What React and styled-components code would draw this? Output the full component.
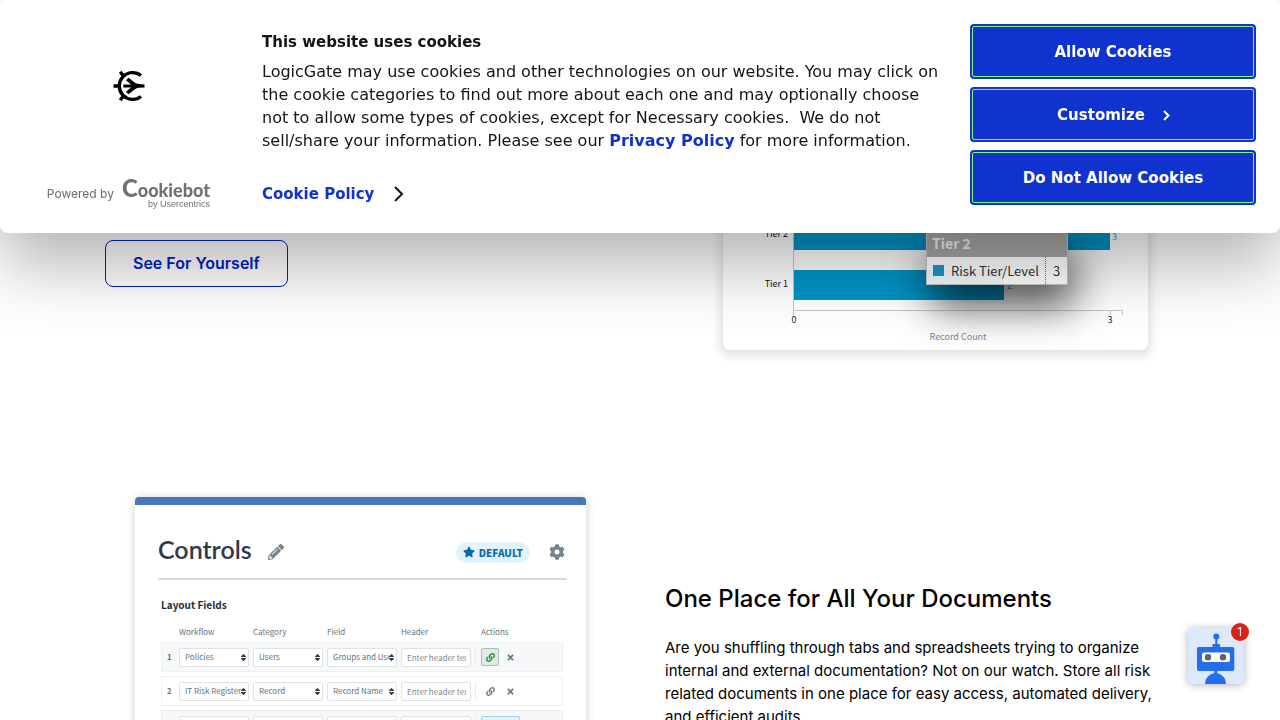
import React from "react";
import styled, { createGlobalStyle } from "styled-components";
import { FaPencilAlt, FaStar, FaCog, FaLink, FaTimes, FaSort } from "react-icons/fa";

const GlobalStyle = createGlobalStyle`
  *, *::before, *::after { box-sizing: border-box; }
  body { margin: 0; background: #fff; color: #000; font-family: Inter, "Liberation Sans", sans-serif; }
  button, input, select { font: inherit; color: inherit; margin: 0; }
  h1, h2, h3, p { margin: 0; }
`;

const smallFont = `"Noto Sans CJK SC", "Noto Sans", sans-serif`;

/* ---------- cookie dialog ---------- */

const Dialog = styled.section`
  position: fixed;
  inset: 0 0 auto 0;
  z-index: 10;
  display: grid;
  grid-template-columns: 214px minmax(0, 1fr) 286px;
  padding: 24px;
  background: #fff;
  border-radius: 8px;
  box-shadow: 0 32px 68px rgba(0, 0, 0, 0.3);
  color: #141414;
  font-family: "DejaVu Sans", sans-serif;
  font-size: 15px;
`;

const Brand = styled.div`
  display: flex;
  flex-direction: column;
  justify-content: space-between;
  align-items: center;
  padding-top: 46px;
`;

const BrandMark = styled.svg`
  display: block;
  width: 32px;
  height: 32px;
  margin-right: 4px;
`;

const PoweredBy = styled.a`
  display: flex;
  align-items: center;
  gap: 8px;
  align-self: flex-end;
  margin-right: 28px;
  color: #6b6b6b;
  font-family: Inter, sans-serif;
  font-size: 12px;
  line-height: 28px;
  text-decoration: none;
  white-space: nowrap;
`;

const Wordmark = styled.span`
  display: flex;
  flex-direction: column;
  align-items: flex-end;
  color: #717171;
`;

const WordmarkName = styled.span`
  display: block;
  font-family: Lato, sans-serif;
  font-weight: 900;
  font-size: 18px;
  line-height: 18px;

  &::first-letter { font-size: 24px; }
`;

const WordmarkBy = styled.span`
  font-family: "Liberation Sans", sans-serif;
  font-size: 9px;
  line-height: 10px;
`;

const Notice = styled.div`
  display: flex;
  flex-direction: column;
  align-items: flex-start;
  padding: 8px 24px 0;
`;

const NoticeTitle = styled.h2`
  font-size: 15px;
  line-height: 20px;
  font-weight: 700;
`;

const NoticeText = styled.p`
  margin-top: 8px;
  font-size: 16px;
  line-height: 23px;
`;

const InlineLink = styled.a`
  color: #1032cf;
  font-weight: 700;
  text-decoration: none;
`;

const PolicyLink = styled(InlineLink)`
  display: flex;
  align-items: center;
  gap: 20px;
  margin-top: 32px;
  line-height: 20px;
`;

const Chevron = styled.svg`
  width: ${(p) => p.$width}px;
  height: ${(p) => p.$height}px;
  overflow: visible;
  fill: none;
  stroke: ${(p) => p.$color};
  stroke-width: 2;
`;

const Choices = styled.div`
  display: flex;
  flex-direction: column;
  gap: 8px;
  padding-bottom: 4px;
`;

const ChoiceButton = styled.button`
  display: flex;
  align-items: center;
  justify-content: center;
  gap: 18px;
  height: 55px;
  border: 2px solid #1032cf;
  border-radius: 4px;
  background: #1032cf;
  color: #fff;
  font-weight: 700;
  outline: 1px solid #7fff66;
  outline-offset: -3px;
`;

/* ---------- page ---------- */

const Page = styled.main`
  height: 100vh;
  overflow: hidden;
  padding-top: 190px;
`;

const Feature = styled.section`
  display: grid;
  grid-template-columns: 1fr 1fr;
  max-width: 1120px;
  margin: 0 auto;

  & + & { margin-top: 146px; }
`;

const Column = styled.div`
  min-width: 0;
  padding: 0 25px;
`;

const CtaColumn = styled(Column)`
  padding-top: 50px;
`;

const CtaLink = styled.a`
  display: inline-block;
  padding: 0 27px;
  border: 1px solid #0022c7;
  border-radius: 8px;
  color: #0022c7;
  font-weight: 600;
  font-size: 16px;
  line-height: 45px;
  text-decoration: none;
`;

const ChartCard = styled.figure`
  position: relative;
  width: 427px;
  margin: 0 0 0 57px;
  border: 1px solid #e8e8e8;
  border-radius: 8px;
  background: #fff;
  box-shadow: 0 3px 8px 3px rgba(0, 0, 0, 0.1);
`;

const Chart = styled.svg`
  display: block;
  width: 100%;
  font-family: ${smallFont};
  font-size: 9px;
`;

const ChartTip = styled.div`
  position: absolute;
  left: 203px;
  top: 37px;
  width: 142px;
  border: 1px solid #c4c4c4;
  background: rgba(255, 255, 255, 0.95);
  color: #333;
  font-family: ${smallFont};
  font-size: 13px;
  box-shadow: 6px 22px 40px 0 rgba(0, 0, 0, 0.65);
`;

const TipHeading = styled.div`
  padding: 0 5px;
  background: #a7a7a7;
  color: #f2f2f2;
  font-size: 14px;
  font-weight: 700;
  line-height: 28px;
`;

const TipRow = styled.div`
  display: grid;
  grid-template-columns: 1fr 21px;
  line-height: 27px;
`;

const TipName = styled.span`
  display: flex;
  align-items: center;
  gap: 7px;
  padding-left: 6px;
  border-right: 1px dotted #777;

  &::before {
    content: "";
    width: 11px;
    height: 11px;
    background: #2095c4;
  }
`;

const TipValue = styled.span`
  text-align: center;
`;

const LayoutCard = styled.div`
  width: 451px;
  margin: 0 0 0 30px;
  padding: 32px 19px 0 23px;
  border-top: 8px solid #4876b9;
  border-radius: 4px;
  background: #fff;
  box-shadow: 0 1px 10px rgba(0, 0, 0, 0.2);
  color: #65727e;
  font-family: ${smallFont};
`;

const LayoutHead = styled.header`
  display: flex;
  align-items: center;
  height: 43px;
  padding-right: 2px;
  padding-bottom: 11px;
  border-bottom: 2px solid #dadada;
  color: #76858f;
  font-size: 16px;
`;

const LayoutTitle = styled.h3`
  margin-right: 16px;
  padding-bottom: 6px;
  color: #30394c;
  font-family: Lato, sans-serif;
  font-size: 25px;
  font-weight: 600;
  line-height: 30px;
`;

const DefaultBadge = styled.span`
  display: flex;
  align-items: center;
  gap: 4px;
  height: 21px;
  margin: 0 19px 0 auto;
  padding: 0 7px;
  border-radius: 11px;
  background: #e2f3fe;
  color: #0b69aa;
  font-size: 10px;
  font-weight: 900;

  svg { font-size: 12px; }
`;

const LayoutLabel = styled.h4`
  margin: 16px 0 0 3px;
  color: #252d38;
  font-size: 10px;
  font-weight: 700;
  line-height: 18px;
`;

const FieldTable = styled.table`
  width: 402px;
  margin: 8px 0 0 3px;
  table-layout: fixed;
  border-collapse: separate;
  border-spacing: 0 4px;
  font-size: 8px;
  line-height: 12px;
`;

const HeadCell = styled.th`
  width: ${(p) => p.$width};
  height: 12px;
  padding: 0 0 0 ${(p) => p.$pad || 0}px;
  font-weight: 400;
  text-align: left;
`;

const FieldRow = styled.tr`
  height: 30px;
  background: ${(p) => (p.$shaded ? "#f6f8fa" : "#fff")};
  outline: 1px solid #eef1f3;
  outline-offset: -1px;
`;

const Cell = styled.td`
  padding: 0;
  vertical-align: middle;
`;

const NumberCell = styled(Cell)`
  padding-left: 6px;
  font-weight: 700;
`;

const SelectBox = styled.label`
  position: relative;
  display: block;
  width: 70px;

  svg {
    position: absolute;
    right: 1px;
    top: 5px;
    font-size: 9px;
    color: #333d49;
  }
`;

const Select = styled.select`
  display: block;
  appearance: none;
  width: 100%;
  height: 19px;
  padding: 0 7px 0 5px;
  border: 1px solid #dfe3e6;
  border-radius: 2px;
  background: #fff;
  line-height: 12px;
`;

const TextField = styled.input`
  display: block;
  width: 70px;
  height: 19px;
  padding: 0 4px 0 5px;
  border: 1px solid #dfe3e6;
  border-radius: 2px;
  background: #fff;

  &::placeholder { color: #7e8993; opacity: 1; }
`;

const Actions = styled.div`
  display: flex;
  align-items: center;
  gap: 2px;
  padding-left: 5px;
  border-left: 1px solid #e9ecee;
`;

const IconButton = styled.button`
  display: grid;
  place-items: center;
  width: ${(p) => (p.$wide ? 39 : 18)}px;
  height: 18px;
  padding: 0;
  border: 1px solid ${(p) => p.$edge || "transparent"};
  border-radius: 2px;
  background: ${(p) => p.$fill || "transparent"};
  color: ${(p) => p.$ink || "#6b7783"};
  font-size: 9px;
`;

const CopyColumn = styled(Column)`
  padding-top: 86px;
`;

const CopyTitle = styled.h2`
  font-size: 24px;
  font-weight: 500;
  line-height: 32px;
`;

const CopyText = styled.p`
  margin-top: 21px;
  font-size: 15px;
  line-height: 23px;
`;

/* ---------- chat launcher ---------- */

const ChatLauncher = styled.button`
  position: fixed;
  right: 36px;
  bottom: 36px;
  width: 56px;
  height: 56px;
  padding: 0;
  border: 0;
  border-radius: 4px;
  background: #dde8fb;
  box-shadow: 0 1px 8px rgba(0, 0, 0, 0.3);

  svg { display: block; }
`;

const UnreadBadge = styled.span`
  position: absolute;
  top: -5px;
  right: -5px;
  width: 18px;
  height: 18px;
  border-radius: 50%;
  background: #d6221a;
  color: #fff;
  font-family: Roboto, sans-serif;
  font-size: 12px;
  line-height: 18px;
  text-align: center;
`;

const rows = [
  { workflow: "Policies", category: "Users", field: "Groups and Users", linked: true },
  { workflow: "IT Risk Register", category: "Record", field: "Record Name" },
  { workflow: "", category: "", field: "", pending: true },
];

function Picker({ name, value }) {
  return (
    <SelectBox>
      <Select aria-label={name} defaultValue={value}>
        <option>{value}</option>
      </Select>
      <FaSort />
    </SelectBox>
  );
}

function FieldLayoutRow({ row, index }) {
  return (
    <FieldRow $shaded={index % 2 === 0}>
      <NumberCell>{index + 1}</NumberCell>
      <Cell><Picker name="Workflow" value={row.workflow} /></Cell>
      <Cell><Picker name="Category" value={row.category} /></Cell>
      <Cell><Picker name="Field" value={row.field} /></Cell>
      <Cell>
        <TextField aria-label="Header" placeholder={row.pending ? "" : "Enter header text"} />
      </Cell>
      <Cell>
        <Actions>
          {row.pending ? (
            <IconButton type="button" $wide $fill="#e2f3fe" $edge="#a9cde6" aria-label="Edit" />
          ) : (
            <>
              <IconButton
                type="button"
                aria-label="Link"
                $fill={row.linked && "#e3e8e8"}
                $edge={row.linked && "#9fc5ab"}
                $ink={row.linked && "#1f9233"}
              >
                <FaLink />
              </IconButton>
              <IconButton type="button" aria-label="Remove"><FaTimes /></IconButton>
            </>
          )}
        </Actions>
      </Cell>
    </FieldRow>
  );
}

function RiskChart() {
  return (
    <ChartCard>
      <Chart viewBox="0 0 425 159" role="img" aria-label="Record count by tier">
        <g fill="#0095c8">
          <rect x="71" y="30" width="316" height="29" />
          <rect x="71" y="79" width="210" height="30" />
        </g>
        <path d="M70.500 30V119.500H399.500V124M70.500 119.500V124M387.500 119.500V124" fill="none" stroke="#c3c8cc" />
        <g fill="#111" textAnchor="end">
          <text x="65" y="46">Tier 2</text>
          <text x="65" y="96">Tier 1</text>
        </g>
        <g fill="#2f9fca">
          <text x="389" y="49">3</text>
          <text x="284" y="98">2</text>
        </g>
        <g fill="#222" textAnchor="middle">
          <text x="71" y="132">0</text>
          <text x="387" y="132">3</text>
        </g>
        <text x="235" y="149" fill="#7d8991" textAnchor="middle">Record Count</text>
      </Chart>
      <ChartTip>
        <TipHeading>Tier 2</TipHeading>
        <TipRow>
          <TipName>Risk Tier/Level</TipName>
          <TipValue>3</TipValue>
        </TipRow>
      </ChartTip>
    </ChartCard>
  );
}

function CookieDialog() {
  return (
    <Dialog role="dialog" aria-labelledby="cookie-title">
      <Brand>
        <BrandMark viewBox="0 0 32 32" aria-hidden="true">
          <g fill="none" stroke="#000" strokeWidth="3.400">
            <path d="M28 5.500A13.400 13.400 0 1 0 28 26.500" />
            <path d="M0.500 16H5M7.300 1.800L10 5.500M7.300 30.200L10 26.500" />
            <path d="M10.300 16H24" strokeWidth="3" />
          </g>
          <path d="M15.500 7.800L22.300 13Q24.500 14.400 31.500 14.400V17.600Q24.500 17.600 22.300 19L15.500 24.200L13 21.800L18.500 17V15L13 10.200Z" />
        </BrandMark>
        <PoweredBy href="#cookiebot">
          Powered by
          <Wordmark>
            <WordmarkName>Cookiebot</WordmarkName>
            <WordmarkBy>by Usercentrics</WordmarkBy>
          </Wordmark>
        </PoweredBy>
      </Brand>
      <Notice>
        <NoticeTitle id="cookie-title">This website uses cookies</NoticeTitle>
        <NoticeText>
          LogicGate may use cookies and other technologies on our website. You may click on the
          cookie categories to find out more about each one and may optionally choose not to allow
          some types of cookies, except for Necessary cookies.&nbsp; We do not sell/share your
          information. Please see our <InlineLink href="#privacy">Privacy Policy</InlineLink> for
          more information.
        </NoticeText>
        <PolicyLink href="#cookie-policy">
          Cookie Policy
          <Chevron $width={16} $height={16} $color="#141414" viewBox="0 0 16 16">
            <path d="M1 1L8 8L1 15" />
          </Chevron>
        </PolicyLink>
      </Notice>
      <Choices>
        <ChoiceButton type="button">Allow Cookies</ChoiceButton>
        <ChoiceButton type="button">
          Customize
          <Chevron $width={6} $height={10} $color="#fff" viewBox="0 0 6 10">
            <path d="M1 1L5.500 5.500L1 10" />
          </Chevron>
        </ChoiceButton>
        <ChoiceButton type="button">Do Not Allow Cookies</ChoiceButton>
      </Choices>
    </Dialog>
  );
}

function ChatBot() {
  return (
    <ChatLauncher type="button" aria-label="Open chat">
      <svg width="56" height="56" viewBox="0 0 56 56">
        <g fill="#256ee9">
          <circle cx="28.300" cy="8.400" r="3" />
          <path d="M27.300 10h2v6h2.700v3h12.300q2 0 2 2v20q0 2-2 2H29.300v2.300A10.500 10.500 0 0 1 38 56H17a10.500 10.500 0 0 1 9.300-10.700V43H11q-2 0-2-2V21q0-2 2-2h13.500v-3h2.800z" />
        </g>
        <rect x="14" y="24.500" width="28" height="9.500" rx="2" fill="#fff" />
        <g fill="#5e6269">
          <circle cx="20" cy="29.300" r="3.200" />
          <circle cx="35" cy="29.300" r="3.200" />
        </g>
      </svg>
      <UnreadBadge>1</UnreadBadge>
    </ChatLauncher>
  );
}

export default function App() {
  return (
    <>
      <GlobalStyle />
      <CookieDialog />
      <Page>
        <Feature>
          <CtaColumn>
            <CtaLink href="#demo">See For Yourself</CtaLink>
          </CtaColumn>
          <Column>
            <RiskChart />
          </Column>
        </Feature>
        <Feature>
          <Column>
            <LayoutCard>
              <LayoutHead>
                <LayoutTitle>Controls</LayoutTitle>
                <FaPencilAlt />
                <DefaultBadge><FaStar />DEFAULT</DefaultBadge>
                <FaCog />
              </LayoutHead>
              <LayoutLabel>Layout Fields</LayoutLabel>
              <FieldTable>
                <thead>
                  <tr>
                    <HeadCell $width="18px" aria-label="Row" />
                    <HeadCell $width="74px">Workflow</HeadCell>
                    <HeadCell $width="74px">Category</HeadCell>
                    <HeadCell $width="74px">Field</HeadCell>
                    <HeadCell $width="74px">Header</HeadCell>
                    <HeadCell $width="auto" $pad={6}>Actions</HeadCell>
                  </tr>
                </thead>
                <tbody>
                  {rows.map((row, i) => <FieldLayoutRow key={i} row={row} index={i} />)}
                </tbody>
              </FieldTable>
            </LayoutCard>
          </Column>
          <CopyColumn>
            <CopyTitle>One Place for All Your Documents</CopyTitle>
            <CopyText>
              Are you shuffling through tabs and spreadsheets trying to organize internal and
              external documentation? Not on our watch. Store all risk related documents in one
              place for easy access, automated delivery, and efficient audits.
            </CopyText>
          </CopyColumn>
        </Feature>
      </Page>
      <ChatBot />
    </>
  );
}
